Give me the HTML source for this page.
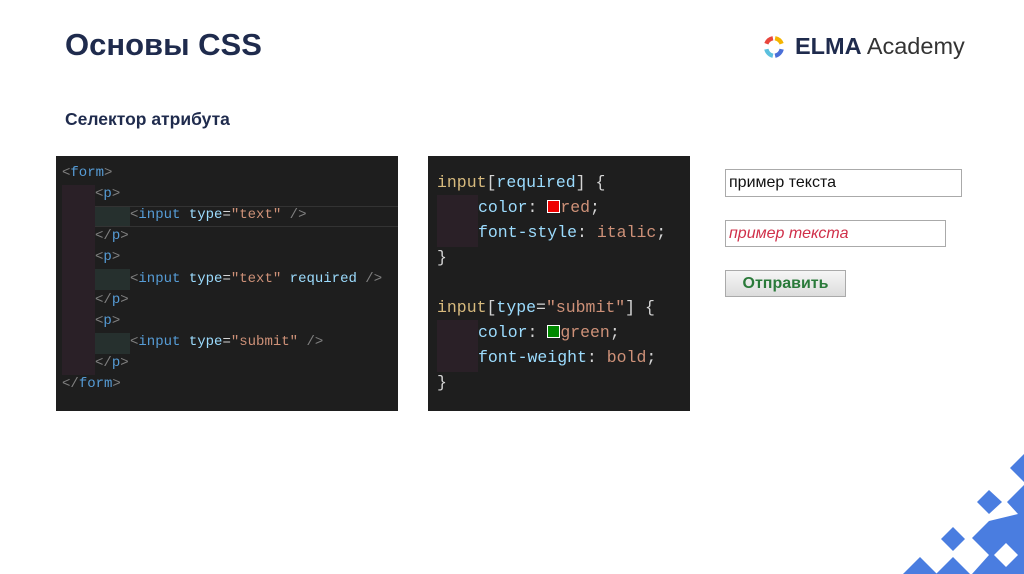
<!DOCTYPE html>
<html><head><meta charset="utf-8"><style>
*{margin:0;padding:0;box-sizing:border-box}
body{width:1024px;height:574px;background:#fff;position:relative;overflow:hidden;font-family:"Liberation Sans",sans-serif}
.abs{position:absolute}
.title{left:65px;top:27px;font-size:31px;font-weight:bold;color:#1f2b4d;white-space:nowrap}
.sub{left:65px;top:109px;font-size:17.5px;font-weight:bold;color:#1f2b4d;white-space:nowrap}
.panel{background:#1e1e1e;font-family:"Liberation Mono",monospace;white-space:pre}
.l{position:absolute;white-space:pre}
.tag{color:#569cd6}.br{color:#808080}.at{color:#9cdcfe}.st{color:#ce9178}.sel{color:#d7ba7d}.pr{color:#9cdcfe}.vl{color:#ce9178}.w{color:#d4d4d4}
</style></head><body>
<div class="abs title">Основы CSS</div>
<div class="abs sub">Селектор атрибута</div>

<div class="abs" style="left:762px;top:35px;width:24px;height:24px">
<svg width="24" height="24" viewBox="0 0 22 22"><g fill="none" stroke-width="4"><path d="M4 8 A8 8 0 0 1 10 3" stroke="#e8453c"/><path d="M12 3 A8 8 0 0 1 18 8" stroke="#f4b400"/><path d="M18 13 A8 8 0 0 1 12 19" stroke="#4a6fd8"/><path d="M10 19 A8 8 0 0 1 4 13" stroke="#5bc0de"/></g></svg></div>
<div class="abs" style="left:795px;top:33px;font-size:23.5px;color:#1f2b4d;white-space:nowrap"><b>ELMA</b> <span style="color:#333">Academy</span></div>

<div class="abs panel" style="left:56px;top:156px;width:342px;height:255px;font-size:14px">
<div class="abs" style="left:6px;top:29px;width:33px;height:190px;background:#2a2027"></div>
<div class="abs" style="left:39px;top:50px;width:35px;height:21px;background:#26302e"></div>
<div class="abs" style="left:39px;top:113px;width:35px;height:21px;background:#26302e"></div>
<div class="abs" style="left:39px;top:177px;width:35px;height:21px;background:#26302e"></div>
<div class="abs" style="left:39px;top:50px;width:303px;height:21px;border-top:1px solid #333;border-bottom:1px solid #333"></div>
<div class="l" style="left:6px;top:9px"><span class="br">&lt;</span><span class="tag">form</span><span class="br">&gt;</span></div>
<div class="l" style="left:39px;top:30px"><span class="br">&lt;</span><span class="tag">p</span><span class="br">&gt;</span></div>
<div class="l" style="left:74px;top:51px"><span class="br">&lt;</span><span class="tag">input</span> <span class="at">type</span><span class="w">=</span><span class="st">"text"</span> <span class="br">/&gt;</span></div>
<div class="l" style="left:39px;top:72px"><span class="br">&lt;/</span><span class="tag">p</span><span class="br">&gt;</span></div>
<div class="l" style="left:39px;top:93px"><span class="br">&lt;</span><span class="tag">p</span><span class="br">&gt;</span></div>
<div class="l" style="left:74px;top:115px"><span class="br">&lt;</span><span class="tag">input</span> <span class="at">type</span><span class="w">=</span><span class="st">"text"</span> <span class="at">required</span> <span class="br">/&gt;</span></div>
<div class="l" style="left:39px;top:136px"><span class="br">&lt;/</span><span class="tag">p</span><span class="br">&gt;</span></div>
<div class="l" style="left:39px;top:157px"><span class="br">&lt;</span><span class="tag">p</span><span class="br">&gt;</span></div>
<div class="l" style="left:74px;top:178px"><span class="br">&lt;</span><span class="tag">input</span> <span class="at">type</span><span class="w">=</span><span class="st">"submit"</span> <span class="br">/&gt;</span></div>
<div class="l" style="left:39px;top:199px"><span class="br">&lt;/</span><span class="tag">p</span><span class="br">&gt;</span></div>
<div class="l" style="left:6px;top:220px"><span class="br">&lt;/</span><span class="tag">form</span><span class="br">&gt;</span></div>
</div>

<div class="abs panel" style="left:428px;top:156px;width:262px;height:255px;font-size:16.5px">
<div class="abs" style="left:9px;top:39px;width:41px;height:52px;background:#2a2027"></div>
<div class="abs" style="left:9px;top:164px;width:41px;height:52px;background:#2a2027"></div>
<div class="l" style="left:9px;top:17px"><span class="sel">input</span><span class="w">[</span><span class="at">required</span><span class="w">] {</span></div>
<div class="l" style="left:50px;top:42px"><span class="pr">color</span><span class="w">: </span><span style="display:inline-block;width:13px;height:13px;background:#e00;border:1px solid #fff;vertical-align:-1px"></span><span class="vl">red</span><span class="w">;</span></div>
<div class="l" style="left:50px;top:67px"><span class="pr">font-style</span><span class="w">: </span><span class="vl">italic</span><span class="w">;</span></div>
<div class="l" style="left:9px;top:92px"><span class="w">}</span></div>
<div class="l" style="left:9px;top:142px"><span class="sel">input</span><span class="w">[</span><span class="at">type</span><span class="w">=</span><span class="st">"submit"</span><span class="w">] {</span></div>
<div class="l" style="left:50px;top:167px"><span class="pr">color</span><span class="w">: </span><span style="display:inline-block;width:13px;height:13px;background:#080;border:1px solid #fff;vertical-align:-1px"></span><span class="vl">green</span><span class="w">;</span></div>
<div class="l" style="left:50px;top:192px"><span class="pr">font-weight</span><span class="w">: </span><span class="vl">bold</span><span class="w">;</span></div>
<div class="l" style="left:9px;top:217px"><span class="w">}</span></div>
</div>

<div class="abs" style="left:725px;top:169px;width:237px;height:28px;border:1px solid #aaa;font-size:16px;padding:4px 3px;color:#111">пример текста</div>
<div class="abs" style="left:725px;top:220px;width:221px;height:27px;border:1px solid #aaa;font-size:16px;padding:4px 3px;color:#d0304a;font-style:italic">пример текста</div>
<div class="abs" style="left:725px;top:270px;width:121px;height:27px;border:1px solid #aaa;background:linear-gradient(#f6f6f6,#dcdcdc);font-size:16px;font-weight:bold;color:#2a7a3a;text-align:center;line-height:25px">Отправить</div>

<svg class="abs" style="left:880px;top:440px" width="144" height="134" viewBox="880 440 144 134"><g fill="#4a7de0">
<polygon points="1024,454 1038,468 1024,482 1010,468"/>
<polygon points="989,490 1002,502 989,514 977,502"/>
<polygon points="953,527 965,539 953,551 941,539"/>
<polygon points="1024,485 1007,502 1018,514 989,521 972,538 989,555 972,574 1024,574"/>
<polygon points="920,557 937,574 903,574"/>
<polygon points="953,557 970,574 936,574"/>
</g><polygon points="1006,543 1018,555 1006,567 994,555" fill="#fff"/></svg>
</body></html>
